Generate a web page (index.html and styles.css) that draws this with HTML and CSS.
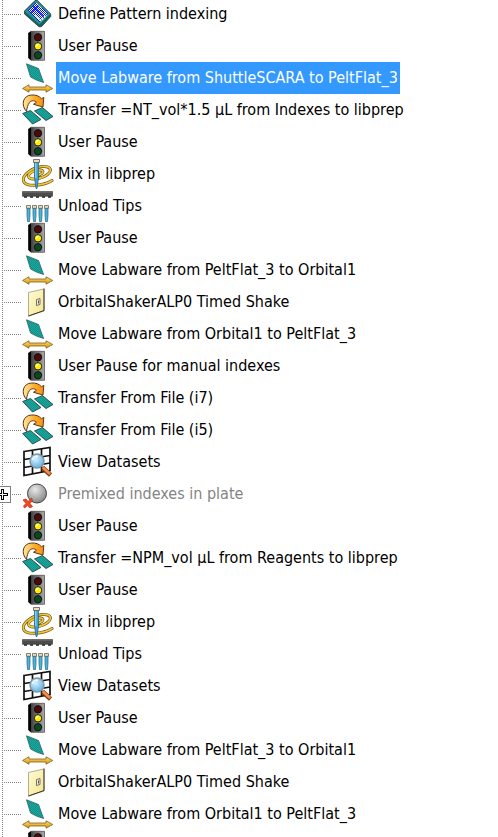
FILE: index.html
```
<!DOCTYPE html>
<html lang="en">
<head>
<meta charset="utf-8">
<title>Method steps</title>
<link rel="stylesheet" href="styles.css">
</head>
<body>
<svg class="defs" aria-hidden="true">
  <defs>
    <linearGradient id="metal" x1="0" x2="1" y1="0" y2="0"><stop offset="0" stop-color="#222"/><stop offset=".3" stop-color="#555"/><stop offset="1" stop-color="#aaa"/></linearGradient>
    <linearGradient id="gold" x1="0" x2="0" y1="0" y2="1"><stop offset="0" stop-color="#ffe070"/><stop offset="1" stop-color="#e09000"/></linearGradient>
    <linearGradient id="arc" x1="0" x2="1" y1="0" y2="0"><stop offset="0" stop-color="#ffe9a0"/><stop offset=".6" stop-color="#ffa820"/><stop offset="1" stop-color="#ff9010"/></linearGradient>
    <linearGradient id="cream" x1="0" x2="1" y1="0" y2="1"><stop offset="0" stop-color="#fffbd8"/><stop offset="1" stop-color="#f4e68c"/></linearGradient>
    <radialGradient id="ball" cx=".4" cy=".3" r=".7"><stop offset="0" stop-color="#e8e8e8"/><stop offset="1" stop-color="#888"/></radialGradient>
    <radialGradient id="lens" cx=".4" cy=".35" r=".7"><stop offset="0" stop-color="#d8f2ff"/><stop offset="1" stop-color="#58aee0"/></radialGradient>
    <pattern id="weave" width="2" height="2" patternUnits="userSpaceOnUse"><path d="M0 0h2v2H0z" fill="#1ca89c"/><path d="M0 0h1v1H0zM1 1h1v1H1z" fill="#14908a"/></pattern>
    <pattern id="check" width="2" height="2" patternUnits="userSpaceOnUse"><path d="M0 0h2v2H0z" fill="#fff"/><path d="M0 0h1v1H0zM1 1h1v1H1z" fill="#0010f0"/></pattern>
    <symbol id="pattern" viewBox="0 0 32 32">
      <path d="M13 2.500 2.500 13v3L17 28.700h2.500L28.700 18.500V16L15.500 2.500z" fill="#0b6560" stroke="#334" stroke-width=".8"/>
      <path d="M13.500 3 3 13.500 17.500 26.500 28.200 16 15.500 3z" fill="#2a938c"/>
      <path d="M14 4.500 6 12.500 17.500 23.500 26 15.500z" fill="url(#check)" shape-rendering="crispEdges"/>
      <path d="M11 8l11 11M8.500 15.500l8-8M16 21l8-8" fill="none" stroke="#1428e8" stroke-width=".8"/>
      <path d="M13 17.500l6 5 5.500-5.500" fill="none" stroke="#fff" stroke-width="1.500" stroke-dasharray="2 1"/>
    </symbol>
    <symbol id="pause" viewBox="0 0 32 32">
      <path d="M6.500 3 9 1.300h13.500v29H9L6.500 28z" fill="url(#metal)" stroke="#444" stroke-width=".7"/>
      <path d="M6.500 3 9 1.500V30L6.500 28z" fill="#000"/>
      <circle cx="16" cy="7.300" r="3.700" fill="#500808" stroke="#111"/>
      <circle cx="16" cy="16.300" r="3.700" fill="#fff000" stroke="#222"/>
      <circle cx="16" cy="25.300" r="3.700" fill="#084a20" stroke="#111"/>
      <circle cx="15" cy="15.300" r="1.200" fill="#ffffa8"/>
    </symbol>
    <symbol id="move" viewBox="0 0 32 32">
      <path d="M4.500 1.800 16.500 6.500 21.600 20.500Q14 18.500 8.500 15z" fill="url(#weave)" stroke="#2b6664" stroke-width=".8"/>
      <path d="M.5 26.500 7 22.800v2.200h17v-2.200l6.700 3.700-6.700 3.700V28H7v2.200z" fill="url(#gold)" stroke="#7b6024" stroke-width=".8"/>
    </symbol>
    <symbol id="transfer" viewBox="0 0 32 32">
      <path d="M.7 19.500 8.500 16.500l10.500 9-8.500 4.500zM12.500 17l8-3.500L31 22.500 24 26.500z" fill="url(#weave)" stroke="#174a48" stroke-width=".9"/>
      <path d="M4.500 17.500C-1.500 11 1 1.300 9.500 1c4.500-.2 7.500.8 10 3.800l2.300-1.500-.8 9.700-9.500-2.700 3-2C12.500 6 9 6.500 7.500 8.500c-1.800 2.500-2.500 5-3 9z" fill="url(#arc)" stroke="#59351c"/>
    </symbol>
    <symbol id="mix" viewBox="0 0 32 32">
      <g fill="none" stroke-linecap="round">
        <path d="M30 22.500C22 27.500 4 30 1.500 23 0 17 10 9.500 20 8.500c9-.7 10.500 4 5.500 8-5 4-18 6.500-19 2-.5-4 9-7.500 13-6.300 4 1.300-1 5.300-6 5.300" stroke="#6b571c" stroke-width="3"/>
        <path d="M30 22.500C22 27.500 4 30 1.500 23 0 17 10 9.500 20 8.500c9-.7 10.500 4 5.500 8-5 4-18 6.500-19 2-.5-4 9-7.500 13-6.300 4 1.300-1 5.300-6 5.300" stroke="#f2c53a" stroke-width="1.700"/>
      </g>
      <path d="M12.500 4h4v16L15 30.500h-1L12.500 20z" fill="#39a4d2" stroke="#22607e" stroke-width=".7"/>
      <path d="M13.800 5v15" stroke="#a8e0f4"/>
      <path d="M11.500 1.500h6v3h-6z" fill="#e6dfc2" stroke="#555" stroke-width=".8"/>
    </symbol>
    <symbol id="unload" viewBox="0 0 32 32">
      <path d="M.5 1.500h30v4.800h-30z" fill="#4c4c4c" stroke="#333" stroke-width=".6"/><path d="M1 2h29" stroke="#777"/>
      <path d="M2 7h27" stroke="#222" stroke-width="1.500" stroke-dasharray="3 3"/>
      <path d="M5 18h3v7l-.5 6.500h-2L5 25zM11 18h3v7l-.5 6.500h-2L11 25zM17 18h3v7l-.5 6.500h-2L17 25zM23 18h3v7l-.5 6.500h-2L23 25z" fill="#4bb4dd" stroke="#22607e" stroke-width=".7"/>
      <path d="M4.500 15.500h4v2.800h-4zM10.500 15.500h4v2.800h-4zM16.500 15.500h4v2.800h-4zM22.500 15.500h4v2.800h-4z" fill="#e6dfc2" stroke="#555" stroke-width=".7"/>
    </symbol>
    <symbol id="shake" viewBox="0 0 32 32">
      <path d="M6.500 6.500 22 3v22L6.500 30z" fill="url(#cream)" stroke="#a49b70" stroke-width=".8"/>
      <path d="M22 2.500v22L6.500 30" fill="none" stroke="#333"/>
      <path d="M14.500 13.500 18 12.500v6l-3.500 1z" fill="#f5efca" stroke="#555" stroke-width=".8"/><path d="M16.500 14.500v3" stroke="#555"/>
    </symbol>
    <symbol id="view" viewBox="0 0 32 32">
      <path d="M2 5.500 28 1.500v23L2 29.500zM2 13.500l26-4M2 21.500l26-4.500M10.500 4v24M19.500 3v23" fill="none" stroke="#111" stroke-width="1.700"/>
      <path d="m20.500 21.500 8 7.500" stroke="#7a3a1a" stroke-width="4.500"/><path d="m21 21.500 7 6.500" stroke="#f58a42" stroke-width="3"/>
      <circle cx="15" cy="15" r="7" fill="url(#lens)" stroke="#82939d" stroke-width="1.400"/>
      <path d="M10.500 14c.5-3 3-4 5.500-3.500" fill="none" stroke="#f2fcff" stroke-width="1.500"/>
    </symbol>
    <symbol id="group" viewBox="0 0 32 32">
      <circle cx="15" cy="15.500" r="9.500" fill="url(#ball)" stroke="#444"/>
      <path d="m1 22 3-1 2 2.500L9.500 20l1 2.500L8 25.500l2.500 3L8 30l-2.500-2.500L2.500 30l-1-2L4 25.500z" fill="#f04a22" stroke="#c02808" stroke-width=".7"/>
    </symbol>
  </defs>
</svg>
<ul class="tree">
  <li class="step"><svg class="icon"><use href="#pattern"/></svg><span class="label">Define Pattern indexing</span></li>
  <li class="step"><svg class="icon"><use href="#pause"/></svg><span class="label">User Pause</span></li>
  <li class="step"><svg class="icon"><use href="#move"/></svg><span class="label selected">Move Labware from ShuttleSCARA to PeltFlat_3</span></li>
  <li class="step"><svg class="icon"><use href="#transfer"/></svg><span class="label">Transfer =NT_vol*1.5 µL from Indexes to libprep</span></li>
  <li class="step"><svg class="icon"><use href="#pause"/></svg><span class="label">User Pause</span></li>
  <li class="step"><svg class="icon"><use href="#mix"/></svg><span class="label">Mix in libprep</span></li>
  <li class="step"><svg class="icon"><use href="#unload"/></svg><span class="label">Unload Tips</span></li>
  <li class="step"><svg class="icon"><use href="#pause"/></svg><span class="label">User Pause</span></li>
  <li class="step"><svg class="icon"><use href="#move"/></svg><span class="label">Move Labware from PeltFlat_3 to Orbital1</span></li>
  <li class="step"><svg class="icon"><use href="#shake"/></svg><span class="label">OrbitalShakerALP0 Timed Shake</span></li>
  <li class="step"><svg class="icon"><use href="#move"/></svg><span class="label">Move Labware from Orbital1 to PeltFlat_3</span></li>
  <li class="step"><svg class="icon"><use href="#pause"/></svg><span class="label">User Pause for manual indexes</span></li>
  <li class="step"><svg class="icon"><use href="#transfer"/></svg><span class="label">Transfer From File (i7)</span></li>
  <li class="step"><svg class="icon"><use href="#transfer"/></svg><span class="label">Transfer From File (i5)</span></li>
  <li class="step"><svg class="icon"><use href="#view"/></svg><span class="label">View Datasets</span></li>
  <li class="step"><button class="expander" type="button" aria-label="Expand"></button><svg class="icon"><use href="#group"/></svg><span class="label disabled">Premixed indexes in plate</span></li>
  <li class="step"><svg class="icon"><use href="#pause"/></svg><span class="label">User Pause</span></li>
  <li class="step"><svg class="icon"><use href="#transfer"/></svg><span class="label">Transfer =NPM_vol µL from Reagents to libprep</span></li>
  <li class="step"><svg class="icon"><use href="#pause"/></svg><span class="label">User Pause</span></li>
  <li class="step"><svg class="icon"><use href="#mix"/></svg><span class="label">Mix in libprep</span></li>
  <li class="step"><svg class="icon"><use href="#unload"/></svg><span class="label">Unload Tips</span></li>
  <li class="step"><svg class="icon"><use href="#view"/></svg><span class="label">View Datasets</span></li>
  <li class="step"><svg class="icon"><use href="#pause"/></svg><span class="label">User Pause</span></li>
  <li class="step"><svg class="icon"><use href="#move"/></svg><span class="label">Move Labware from PeltFlat_3 to Orbital1</span></li>
  <li class="step"><svg class="icon"><use href="#shake"/></svg><span class="label">OrbitalShakerALP0 Timed Shake</span></li>
  <li class="step"><svg class="icon"><use href="#move"/></svg><span class="label">Move Labware from Orbital1 to PeltFlat_3</span></li>
  <li class="step"><svg class="icon"><use href="#pause"/></svg></li>
</ul>
</body>
</html>
```
FILE: styles.css
```
body {
  margin: 0;
  height: 100vh;
  overflow: hidden;
  background: #fff;
  color: #000;
  font: 16px/32px "DejaVu Sans Condensed", "DejaVu Sans", sans-serif;
}

.defs {
  position: absolute;
  width: 0;
  height: 0;
}

.tree {
  list-style: none;
  margin: -2px 0 0;
  padding: 0;
}

.step {
  position: relative;
  display: flex;
  height: 32px;
  padding-left: 22px;
}

.step::before,
.step::after {
  content: "";
  position: absolute;
}

.step::before {
  left: 2px;
  top: 0;
  width: 1px;
  height: 32px;
  background: repeating-linear-gradient(#808080 0 1px, transparent 1px 2px);
}

.step::after {
  left: 4px;
  top: 16px;
  width: 17px;
  height: 1px;
  background: repeating-linear-gradient(90deg, #808080 0 1px, transparent 1px 2px);
}

.icon {
  flex: none;
  width: 32px;
  height: 32px;
  margin-right: 2px;
}

.label {
  padding: 0 2px;
  white-space: nowrap;
}

.selected {
  background: #3399ff;
  color: #fff;
}

.disabled {
  color: #848484;
}

.expander {
  position: absolute;
  z-index: 1;
  left: -6px;
  top: 8px;
  width: 17px;
  height: 17px;
  padding: 0;
  border: 1px solid #808080;
  background:
    linear-gradient(#fff, #fff) center / 9px 1px no-repeat,
    linear-gradient(#fff, #fff) center / 1px 9px no-repeat,
    linear-gradient(#000, #000) center / 11px 3px no-repeat,
    linear-gradient(#000, #000) center / 3px 11px no-repeat,
    #fff;
}
```
